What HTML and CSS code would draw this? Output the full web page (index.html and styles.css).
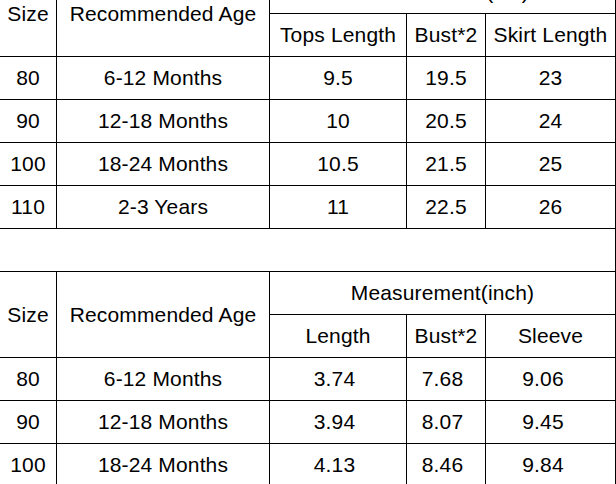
FILE: index.html
```html
<!DOCTYPE html>
<html lang="en">
<head>
<meta charset="utf-8">
<title>Size Chart</title>
<link rel="stylesheet" href="styles.css">
</head>
<body>
<div class="sheet">
<table class="sizes">
  <colgroup>
    <col class="c-size">
    <col class="c-age">
    <col class="c-len">
    <col class="c-bust">
    <col class="c-last">
  </colgroup>
  <tbody>
    <tr>
      <td rowspan="2">Size</td>
      <td rowspan="2">Recommended Age</td>
      <td colspan="3">Measurement(cm)</td>
    </tr>
    <tr>
      <td>Tops Length</td>
      <td>Bust*2</td>
      <td>Skirt Length</td>
    </tr>
    <tr><td>80</td><td>6-12 Months</td><td>9.5</td><td>19.5</td><td>23</td></tr>
    <tr><td>90</td><td>12-18 Months</td><td>10</td><td>20.5</td><td>24</td></tr>
    <tr><td>100</td><td>18-24 Months</td><td>10.5</td><td>21.5</td><td>25</td></tr>
    <tr><td>110</td><td>2-3 Years</td><td>11</td><td>22.5</td><td>26</td></tr>
    <tr class="gap"><td colspan="5"></td></tr>
    <tr>
      <td rowspan="2">Size</td>
      <td rowspan="2">Recommended Age</td>
      <td colspan="3">Measurement(inch)</td>
    </tr>
    <tr>
      <td>Length</td>
      <td>Bust*2</td>
      <td>Sleeve</td>
    </tr>
    <tr class="inch"><td>80</td><td>6-12 Months</td><td>3.74</td><td>7.68</td><td>9.06</td></tr>
    <tr class="inch"><td>90</td><td>12-18 Months</td><td>3.94</td><td>8.07</td><td>9.45</td></tr>
    <tr class="inch"><td>100</td><td>18-24 Months</td><td>4.13</td><td>8.46</td><td>9.84</td></tr>
  </tbody>
</table>
</div>
</body>
</html>
```
FILE: styles.css
```css
html, body {
  margin: 0;
  padding: 0;
  background: #fff;
  overflow: hidden;
}

.sheet {
  margin-top: -30px;
  margin-left: -1px;
}

.sizes {
  border-collapse: separate;
  border-spacing: 0;
  table-layout: fixed;
  width: 617px;
  border-left: 1px solid #000;
  border-top: 1px solid #000;
  font-family: "Liberation Sans", Arial, sans-serif;
  font-size: 21px;
  letter-spacing: 0.15px;
  color: #000;
}

.c-size { width: 57px; }
.c-age { width: 213px; }
.c-len { width: 137px; }
.c-bust { width: 79px; }
.c-last { width: 130px; }

.sizes td {
  border-right: 1px solid #000;
  border-bottom: 1px solid #000;
  padding: 0;
  height: 42px;
  text-align: center;
  vertical-align: middle;
  white-space: nowrap;
  line-height: 24px;
}

.inch td:nth-child(3),
.inch td:nth-child(4) {
  padding-right: 7px;
}

.inch td:nth-child(5) {
  padding-right: 15px;
}
```
